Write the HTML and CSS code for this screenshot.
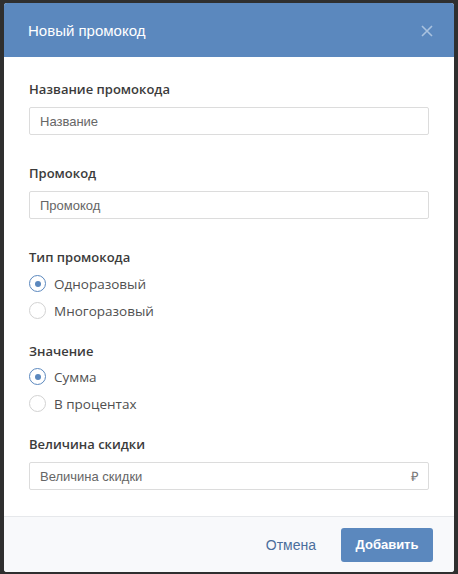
FILE: index.html
```html
<!DOCTYPE html>
<html lang="ru">
<head>
<meta charset="utf-8">
<title>Новый промокод</title>
<link rel="stylesheet" href="styles.css">
</head>
<body>
<div class="modal">
  <div class="modal-header">
    <div class="modal-title">Новый промокод</div>
    <svg class="close" width="12" height="12" viewBox="0 0 12 12"><path d="M1 1L11 11M11 1L1 11" stroke="currentColor" stroke-width="1.6" fill="none"/></svg>
  </div>
  <div class="modal-body">
    <div class="group">
      <div class="label">Название промокода</div>
      <div class="input"><span class="ph">Название</span></div>
    </div>
    <div class="group">
      <div class="label">Промокод</div>
      <div class="input"><span class="ph">Промокод</span></div>
    </div>
    <div class="group radio-group">
      <div class="label">Тип промокода</div>
      <div class="radio checked"><span class="circle"></span><span>Одноразовый</span></div>
      <div class="radio"><span class="circle"></span><span>Многоразовый</span></div>
    </div>
    <div class="group radio-group tight">
      <div class="label">Значение</div>
      <div class="radio checked"><span class="circle"></span><span>Сумма</span></div>
      <div class="radio"><span class="circle"></span><span>В процентах</span></div>
    </div>
    <div class="group last">
      <div class="label">Величина скидки</div>
      <div class="input"><span class="ph">Величина скидки</span><span class="suffix">₽</span></div>
    </div>
  </div>
  <div class="modal-footer">
    <span class="btn-link">Отмена</span>
    <span class="btn-primary">Добавить</span>
  </div>
</div>
</body>
</html>
```
FILE: styles.css
```css
html, body {
  margin: 0;
  padding: 0;
}
body {
  width: 458px;
  height: 574px;
  background: #2f2f2f;
  position: relative;
  overflow: hidden;
  font-family: "Open Sans", "Liberation Sans", sans-serif;
}
.modal {
  position: absolute;
  left: 4px;
  top: 3px;
  width: 450px;
  background: #fff;
  border-radius: 3px;
  overflow: hidden;
}
.modal-header {
  height: 54px;
  background: #5b88be;
  display: flex;
  align-items: center;
  justify-content: space-between;
  padding: 0 21px 0 24px;
}
.modal-title {
  color: #fff;
  font-family: "Liberation Sans", Arial, sans-serif;
  font-size: 15px;
}
.close {
  color: #a9c2df;
  margin-top: 1px;
}
.modal-body {
  padding: 23px 25px 26px;
}
.group {
  margin-bottom: 29px;
}
.group.radio-group {
  margin-bottom: 18px;
}
.group.last {
  margin-bottom: 0;
}
.label {
  font-size: 13px;
  font-weight: 600;
  color: #3b3b3b;
  line-height: 18px;
  margin-bottom: 9px;
}
.radio-group .label {
  margin-bottom: 4px;
}
.radio-group.tight .label {
  margin-bottom: 3px;
}
.input {
  height: 28px;
  box-sizing: border-box;
  border: 1px solid #dcdcdc;
  border-radius: 2px;
  display: flex;
  align-items: center;
  justify-content: space-between;
  padding: 0 9px 0 10px;
  font-family: "Liberation Sans", Arial, sans-serif;
  font-size: 13px;
}
.ph {
  color: #666;
}
.suffix {
  color: #777;
  font-size: 13px;
}
.radio {
  height: 27px;
  display: flex;
  align-items: center;
  gap: 8px;
  font-size: 13.5px;
  color: #505050;
}
.circle {
  width: 17px;
  height: 17px;
  box-sizing: border-box;
  border: 1px solid #d2d2d2;
  border-radius: 50%;
  display: flex;
  align-items: center;
  justify-content: center;
  flex: none;
}
.radio.checked .circle {
  border-color: #5b88be;
}
.radio.checked .circle::after {
  content: "";
  width: 6px;
  height: 6px;
  border-radius: 50%;
  background: #5b88be;
}
.modal-footer {
  border-top: 1px solid #e6e8eb;
  background: #f8f9fb;
  height: 55px;
  display: flex;
  align-items: center;
  justify-content: flex-end;
  padding: 0 21px 0 0;
  gap: 25px;
}
.btn-link {
  font-family: "Liberation Sans", Arial, sans-serif;
  font-size: 14px;
  color: #4b6e9c;
}
.btn-primary {
  height: 34px;
  width: 92px;
  box-sizing: border-box;
  background: #5b88be;
  border-radius: 3px;
  color: #fff;
  font-family: "Liberation Sans", Arial, sans-serif;
  font-weight: 700;
  font-size: 13px;
  display: flex;
  align-items: center;
  justify-content: center;
}
```
